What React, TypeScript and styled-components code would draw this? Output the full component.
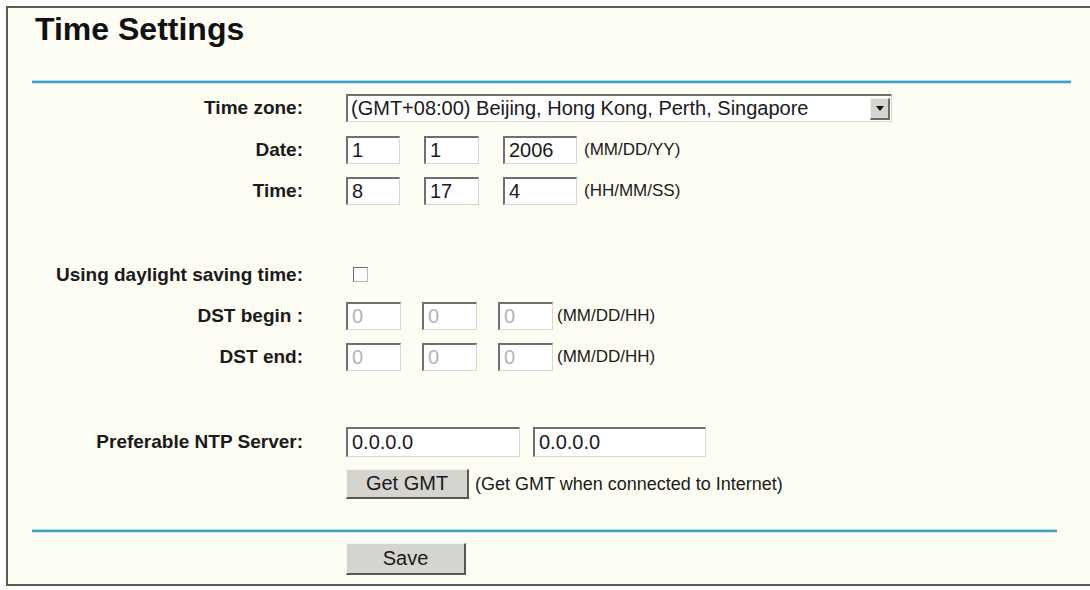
import React from "react";
import styled, { createGlobalStyle } from "styled-components";

const GlobalStyle = createGlobalStyle`
  html, body { margin: 0; padding: 0; background: #fff; overflow: hidden; }
  body { font-family: "Liberation Sans", Arial, sans-serif; color: #111; }
`;

const Frame = styled.div`
  margin: 6px 0 0 6px;
  width: 1110px;
  height: 580px;
  box-sizing: border-box;
  background: #fdfdf4;
  border-top: 2px solid #5a5a5a;
  border-left: 2px solid #5a5a5a;
  border-bottom: 2px solid #5a5a5a;
`;

const Title = styled.h1`
  margin: 0;
  padding: 3px 0 0 27px;
  font-size: 32px;
  line-height: 36px;
  font-weight: 700;
  color: #111;
`;

const Rule = styled.div<{ $width: number; $top: number }>`
  margin: ${({ $top }) => $top}px 0 0 24px;
  width: ${({ $width }) => $width}px;
  height: 2px;
  background: #3f9fbd;
  box-shadow: 0 -1px 0 #a9dded, 0 1px 0 #c6edf6;
`;

const Form = styled.div`
  padding-top: 4px;
`;

const Row = styled.div<{ $h: number; $mt?: number }>`
  display: grid;
  grid-template-columns: 295px 1fr;
  column-gap: 43px;
  align-items: center;
  height: ${({ $h }) => $h}px;
  margin-top: ${({ $mt }) => $mt ?? 0}px;
`;

const Label = styled.div`
  text-align: right;
  font-size: 19px;
  font-weight: 700;
  color: #1a1a1a;
  white-space: nowrap;
`;

const Fields = styled.div<{ $gap?: number }>`
  display: flex;
  align-items: center;
  gap: ${({ $gap }) => $gap ?? 0}px;
`;

const Box = styled.div<{ $w: number; $h?: number; $disabled?: boolean }>`
  width: ${({ $w }) => $w}px;
  height: ${({ $h }) => $h ?? 28}px;
  box-sizing: border-box;
  display: flex;
  align-items: center;
  padding-left: 4px;
  background: #fff;
  border-top: 2px solid #707070;
  border-left: 2px solid #707070;
  border-right: 1px solid #d6d6d6;
  border-bottom: 1px solid #d6d6d6;
  font-size: 20px;
  color: ${({ $disabled }) => ($disabled ? "#b4b4b4" : "#1a1a1a")};
`;

const Select = styled.div`
  width: 546px;
  height: 28px;
  box-sizing: border-box;
  display: flex;
  align-items: center;
  justify-content: space-between;
  padding: 0 1px 0 3px;
  background: #fff;
  border-top: 2px solid #707070;
  border-left: 2px solid #707070;
  border-right: 1px solid #d6d6d6;
  border-bottom: 1px solid #d6d6d6;
  font-size: 20px;
  color: #1a1a1a;
`;

const ArrowButton = styled.div`
  width: 20px;
  height: 22px;
  box-sizing: border-box;
  display: flex;
  align-items: center;
  justify-content: center;
  background: #d6d4cf;
  border-top: 1px solid #f2f2f2;
  border-left: 1px solid #f2f2f2;
  border-right: 2px solid #6a6a6a;
  border-bottom: 2px solid #6a6a6a;
`;

const Hint = styled.span<{ $size?: number; $ml?: number }>`
  margin-left: ${({ $ml }) => $ml ?? 7}px;
  font-size: ${({ $size }) => $size ?? 17}px;
  color: #1a1a1a;
  white-space: nowrap;
`;

const Check = styled.span`
  margin-left: 7px;
  width: 15px;
  height: 15px;
  box-sizing: border-box;
  background: #fff;
  border-top: 1px solid #6e6e6e;
  border-left: 1px solid #6e6e6e;
  border-right: 1px solid #b8b8b8;
  border-bottom: 1px solid #b8b8b8;
`;

const Button = styled.div<{ $w: number; $h: number }>`
  width: ${({ $w }) => $w}px;
  height: ${({ $h }) => $h}px;
  box-sizing: border-box;
  display: flex;
  align-items: center;
  justify-content: center;
  background: #d6d4cf;
  border-top: 1px solid #f4f4f4;
  border-left: 1px solid #f4f4f4;
  border-right: 2px solid #555;
  border-bottom: 2px solid #555;
  font-size: 20px;
  color: #1a1a1a;
`;

const SaveRow = styled.div`
  padding: 11px 0 0 338px;
`;

export default function App() {
  return (
    <>
      <GlobalStyle />
      <Frame>
        <Title>Time Settings</Title>
        <Rule $width={1039} $top={34} />
        <Form>
          <Row $h={42}>
            <Label>Time zone:</Label>
            <Fields>
              <Select>
                <span>(GMT+08:00) Beijing, Hong Kong, Perth, Singapore</span>
                <ArrowButton>
                  <svg width="8" height="5" viewBox="0 0 8 5">
                    <path d="M0 0h8L4 5z" fill="#111" />
                  </svg>
                </ArrowButton>
              </Select>
            </Fields>
          </Row>
          <Row $h={41}>
            <Label>Date:</Label>
            <Fields $gap={24}>
              <Box $w={54}>1</Box>
              <Box $w={55}>1</Box>
              <Box $w={74}>2006</Box>
              <Hint $ml={-17}>(MM/DD/YY)</Hint>
            </Fields>
          </Row>
          <Row $h={42}>
            <Label>Time:</Label>
            <Fields $gap={24}>
              <Box $w={54}>8</Box>
              <Box $w={55}>17</Box>
              <Box $w={74}>4</Box>
              <Hint $ml={-17}>(HH/MM/SS)</Hint>
            </Fields>
          </Row>
          <Row $h={41} $mt={42}>
            <Label>Using daylight saving time:</Label>
            <Fields>
              <Check />
            </Fields>
          </Row>
          <Row $h={41}>
            <Label>DST begin :</Label>
            <Fields $gap={21}>
              <Box $w={55} $disabled>0</Box>
              <Box $w={55} $disabled>0</Box>
              <Box $w={55} $disabled>0</Box>
              <Hint $ml={-17}>(MM/DD/HH)</Hint>
            </Fields>
          </Row>
          <Row $h={41}>
            <Label>DST end:</Label>
            <Fields $gap={21}>
              <Box $w={55} $disabled>0</Box>
              <Box $w={55} $disabled>0</Box>
              <Box $w={55} $disabled>0</Box>
              <Hint $ml={-17}>(MM/DD/HH)</Hint>
            </Fields>
          </Row>
          <Row $h={41} $mt={44}>
            <Label>Preferable NTP Server:</Label>
            <Fields $gap={13}>
              <Box $w={174} $h={30}>0.0.0.0</Box>
              <Box $w={173} $h={30}>0.0.0.0</Box>
            </Fields>
          </Row>
          <Row $h={44}>
            <span />
            <Fields>
              <Button $w={123} $h={30}>Get GMT</Button>
              <Hint $size={18} $ml={6}>(Get GMT when connected to Internet)</Hint>
            </Fields>
          </Row>
        </Form>
        <Rule $width={1025} $top={24} />
        <SaveRow>
          <Button $w={120} $h={32}>Save</Button>
        </SaveRow>
      </Frame>
    </>
  );
}
